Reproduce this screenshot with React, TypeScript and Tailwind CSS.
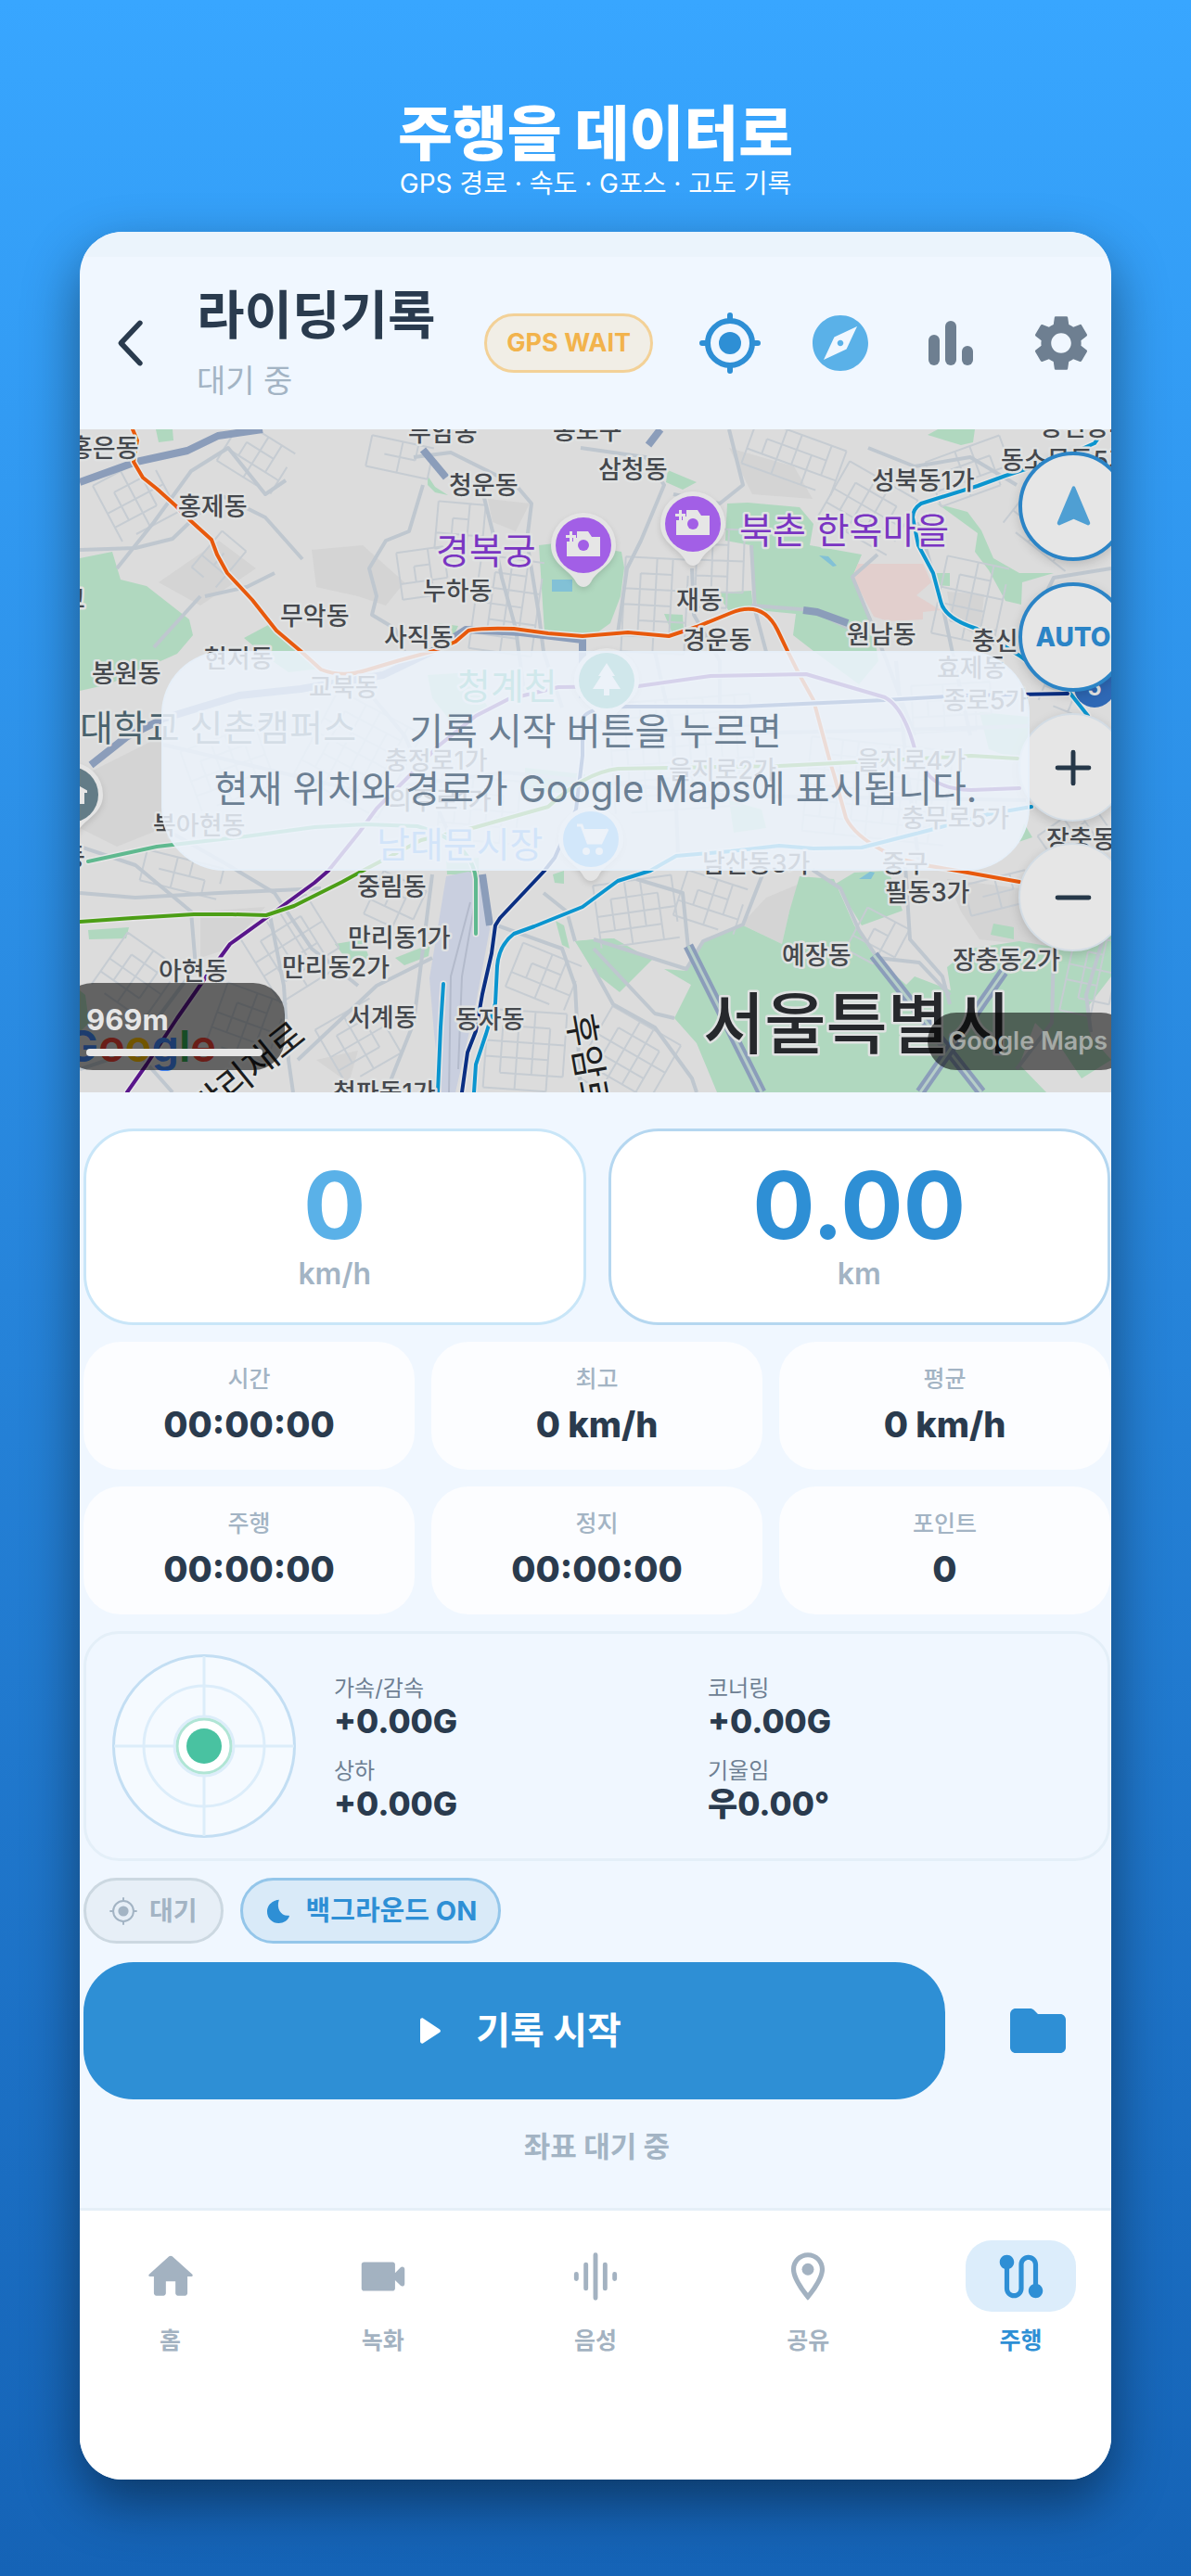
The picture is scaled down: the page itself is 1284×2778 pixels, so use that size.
import { useState } from "react";
import type { ReactNode } from "react";
import clsx from "clsx";
import { MdExplore, MdRoute, MdSettings } from "react-icons/md";

interface IconProps {
  className?: string;
}

const Icon = ({ className, children }: IconProps & { children: ReactNode }) => (
  <svg viewBox="0 0 24 24" fill="currentColor" aria-hidden="true" className={clsx("shrink-0", className)}>
    {children}
  </svg>
);

const BackIcon = ({ className }: IconProps) => (
  <Icon className={className}>
    <path d="M15.6 4.8 8.8 12l6.8 7.2" fill="none" stroke="currentColor" strokeWidth="1.9" strokeLinecap="round" strokeLinejoin="round" />
  </Icon>
);

const LocateIcon = ({ className }: IconProps) => (
  <Icon className={className}>
    <circle cx="12" cy="12" r="4" />
    <circle cx="12" cy="12" r="8" fill="none" stroke="currentColor" strokeWidth="2" />
    <path d="M12 2v2M12 20v2M2 12h2M20 12h2" stroke="currentColor" strokeWidth="2" strokeLinecap="round" />
  </Icon>
);

const LocateThinIcon = ({ className }: IconProps) => (
  <Icon className={className}>
    <circle cx="12" cy="12" r="4.2" />
    <circle cx="12" cy="12" r="8.2" fill="none" stroke="currentColor" strokeWidth="1.5" />
    <path d="M12 1v3M12 20v3M1 12h3M20 12h3" stroke="currentColor" strokeWidth="1.5" />
  </Icon>
);

const BarsIcon = ({ className }: IconProps) => (
  <Icon className={className}>
    <rect x="4" y="9" width="4" height="11" rx="2" />
    <rect x="10" y="4" width="4" height="16" rx="2" />
    <rect x="16" y="13" width="4" height="7" rx="2" />
  </Icon>
);

const ArrowIcon = ({ className }: IconProps) => (
  <Icon className={className}>
    <path d="M11.3 3.2c.3-.7 1.1-.7 1.4 0l6.7 15.9c.3.8-.4 1.5-1.1 1.2L12 17.6l-6.3 2.7c-.7.3-1.4-.4-1.1-1.2z" />
  </Icon>
);

const MoonIcon = ({ className }: IconProps) => (
  <Icon className={className}>
    <path d="M12.6 2.8C12.2 2.5 3 4 3 12.6a9.2 9.2 0 0 0 9.4 9.2c4 0 7.2-2.2 8.5-5.4.2-.6-.2-1-.8-.9-5.6.6-10-5.4-7.5-12.7z" />
  </Icon>
);

const PlayIcon = ({ className }: IconProps) => (
  <Icon className={className}>
    <path d="M7 6.2v11.6c0 .8.9 1.3 1.5.9l9-5.8c.6-.4.6-1.3 0-1.7l-9-5.9C7.9 4.900 7 5.400 7 6.200z" />
  </Icon>
);

const FolderIcon = ({ className }: IconProps) => (
  <Icon className={className}>
    <path d="M10.59 4.59C10.21 4.21 9.7 4 9.17 4H4c-1.1 0-1.99.9-1.99 2L2 18c0 1.1.9 2 2 2h16c1.1 0 2-.9 2-2V8c0-1.1-.9-2-2-2h-8l-1.41-1.41z" />
  </Icon>
);

const HomeIcon = ({ className }: IconProps) => (
  <Icon className={className}>
    <path d="M10 19v-5h4v5c0 .55.45 1 1 1h3c.55 0 1-.45 1-1v-7h1.7c.46 0 .68-.57.33-.87L12.67 3.6c-.38-.34-.96-.34-1.34 0l-8.36 7.53c-.34.3-.13.87.33.87H5v7c0 .55.45 1 1 1h3c.55 0 1-.45 1-1z" />
  </Icon>
);

const VideoIcon = ({ className }: IconProps) => (
  <Icon className={className}>
    <path d="M17 10.5V7c0-.55-.45-1-1-1H4c-.55 0-1 .45-1 1v10c0 .55.45 1 1 1h12c.55 0 1-.45 1-1v-3.5l2.29 2.29c.63.63 1.71.18 1.71-.71V8.91c0-.89-1.08-1.34-1.71-.71L17 10.5z" />
  </Icon>
);

const VoiceIcon = ({ className }: IconProps) => (
  <Icon className={className}>
    <path d="M4 11v2M8 7v10M12 3v18M16 7v10M20 11v2" stroke="currentColor" strokeWidth="1.9" strokeLinecap="round" />
  </Icon>
);

const PinIcon = ({ className }: IconProps) => (
  <Icon className={className}>
    <path d="M12 2C8.13 2 5 5.13 5 9c0 5.25 7 13 7 13s7-7.75 7-13c0-3.87-3.13-7-7-7zM7 9c0-2.76 2.24-5 5-5s5 2.24 5 5c0 2.88-2.88 7.19-5 9.88C9.92 16.21 7 11.85 7 9z" />
    <circle cx="12" cy="9" r="2.5" />
  </Icon>
);

// ---------------------------------------------------------------- map data

const parks = [
  "0,139 35,132 44,162 72,169 118,205 122,222 105,242 31,275 0,282",
  "82,0 100,0 101,12 85,14",
  "177,225 205,210 238,239 260,258 225,262 201,245",
  "495,125 520,122 584,132 587,149 583,180 572,209 554,222 501,219",
  "375,50 383,62 397,71 383,68 375,60",
  "386,209 408,212 402,225",
  "698,80 720,79 776,84 791,102 787,125 843,135 833,159 854,205 861,250 840,275 791,239 769,222 772,199 730,195 724,125 696,120",
  "924,80 957,89 972,109 985,139 1013,155 1050,155 1016,165 1015,189 998,185 980,152 965,132 968,112",
  "634,44 665,57 650,65 632,57",
  "914,6 925,0 965,0 963,14 950,17",
  "630,199 650,200 651,215 638,218",
  "686,176 724,174 726,194 700,196",
  "920,155 938,155 938,169 922,168",
  "375,265 420,262 440,300 400,315 380,290",
  "480,365 545,372 540,395 480,388",
  "700,400 735,410 740,430 705,435",
  "970,305 1024,310 1020,360 980,345",
  "554,550 576,549 617,572 582,607 554,585 534,552",
  "534,552 574,549 574,600 549,575",
  "9,540 53,537 50,549 10,550",
  "275,555 305,550 312,570 290,575",
  "340,570 378,555 376,568 350,578",
  "395,465 430,462 430,480 396,480",
  "510,480 522,476 522,490 512,489",
  "513,530 522,535 528,560 520,556",
  "0,605 6,610 10,640 0,650",
  "776,482 813,485 835,535 857,569 891,599 900,590 939,605 935,580 960,560 1013,552 1060,560 1112,540 1112,590 1085,625 1090,655 1112,680 1080,700 1060,670 1030,640 1013,685 1042,715 687,715 665,662 641,635 659,599 630,582 654,584 672,552 713,534 757,555 765,520",
  "835,478 872,476 887,519 843,535 815,490",
  "985,533 1007,537 1007,550 982,545",
  "1018,425 1027,440 1012,445",
];

const grounds = [
  "250,130 305,125 350,165 330,190 300,180 255,170",
  "440,75 485,80 470,110 445,100",
  "130,520 200,515 160,560 130,570",
  "0,375 90,330 90,430 40,450 0,430",
  "713,534 740,505 776,490 776,519 765,520 757,555",
  "935,485 1013,495 1060,560 970,550 950,520",
  "255,680 300,670 290,705",
  "700,20 770,40 790,75 725,70",
  "935,175 975,178 970,225 940,205",
  "85,165 150,120 190,150 130,190",
];

const highways = [
  "M0 57 61 35 116 23 149 7 197 0",
  "M370 22 395 52",
  "M12 362 50 332 90 312 172 287 238 280 327 265 379 240 416 216 475 219 542 227V290",
  "M780 195 795 197 828 209",
  "M626 0 613 17",
  "M434 480 442 535",
];

const tunnels = ["M656 557 735 715", "M856 567 972 715", "M996 585 906 715"];

const roads = [
  "M0 130 60 128 100 118 150 70 200 95 240 140",
  "M40 150 80 100 120 45 160 20 200 70 222 55",
  "M360 30 400 25 470 60 487 80 482 120",
  "M430 50 445 110 455 160 470 215 480 290",
  "M370 60 355 110 330 120 312 150 320 180 315 200 340 215 350 240",
  "M482 120 495 200 500 240 520 300",
  "M135 180 180 170 210 155",
  "M80 235 130 180",
  "M540 20 610 30 630 60 605 120 590 150 580 220",
  "M700 0 715 60 690 80 640 70",
  "M724 190 790 195 830 215",
  "M860 135 833 159 856 215 870 250 900 330",
  "M724 125 728 195 740 240",
  "M904 100 930 190 945 260 960 330",
  "M1112 150 1050 160 1030 200 1045 250",
  "M850 20 900 40 960 30 1010 60",
  "M660 150 662 200 690 250 690 300",
  "M0 500 60 505 150 500 260 495",
  "M90 430 160 470 210 500 250 560 300 600",
  "M0 450 60 470 120 520 125 580 80 640",
  "M205 524 220 600 225 680 230 715",
  "M380 480 370 560 360 640 330 715",
  "M450 535 520 560 534 600 540 715",
  "M534 552 525 520 500 500",
  "M235 680 320 600 380 570",
  "M0 690 60 670 100 715",
  "M554 582 575 620 620 645 660 700 665 715",
  "M641 635 620 630 554 560",
  "M554 550 654 582 672 552 715 534 740 470",
  "M656 560 650 500 600 485",
  "M790 475 820 495 840 540 860 570 905 575 938 610",
  "M890 470 895 550 930 590 938 620",
  "M1050 560 1048 640 1010 690",
  "M1112 520 1085 610 1090 650",
  "M1026 470 1060 500 1112 520",
  "M90 340 300 390 460 370 700 395 1020 400",
  "M620 240 640 330 645 460",
  "M300 270 350 330 400 440",
  "M880 250 890 350 905 470",
  "M600 330 850 325 1024 320",
];

// Short dense blocks: centre x, centre y, rotation, columns, rows
const blocks: [number, number, number, number, number][] = [
  [60, 75, -28, 4, 4],
  [190, 30, 32, 4, 3],
  [150, 140, 40, 2, 3],
  [345, 30, 12, 4, 2],
  [410, 105, 5, 3, 3],
  [370, 155, -8, 3, 3],
  [460, 190, 8, 4, 6],
  [620, 190, 3, 4, 6],
  [690, 150, 2, 3, 5],
  [770, 30, 20, 6, 3],
  [850, 85, 30, 5, 4],
  [960, 45, -20, 5, 3],
  [960, 185, 12, 4, 5],
  [1050, 100, 38, 5, 4],
  [1070, 270, 22, 3, 4],
  [1075, 440, -35, 4, 3],
  [160, 365, -20, 5, 4],
  [300, 350, 28, 6, 6],
  [430, 410, 5, 5, 4],
  [650, 350, -4, 9, 7],
  [860, 390, 6, 9, 6],
  [940, 300, -3, 5, 3],
  [110, 480, 14, 5, 2],
  [230, 560, -32, 5, 5],
  [60, 590, 35, 4, 4],
  [180, 640, 20, 4, 4],
  [300, 660, -30, 4, 4],
  [340, 510, 25, 3, 3],
  [480, 670, 4, 5, 5],
  [500, 590, 22, 4, 3],
  [600, 520, -8, 5, 4],
  [680, 510, 18, 4, 3],
  [590, 680, 30, 5, 5],
  [860, 550, 28, 3, 3],
  [1090, 590, 12, 3, 5],
  [990, 500, -14, 4, 2],
];

const blockPath = (cols: number, rows: number) => {
  const gap = 17;
  const w = cols * gap;
  const h = rows * gap;
  let d = "";
  for (let c = 0; c <= cols; c++) {
    const cut = (c * 7) % 3 === 1 ? gap : 0;
    d += `M${c * gap - w / 2} ${-h / 2 + cut}V${h / 2 - (c % 2) * gap}`;
  }
  for (let r = 0; r <= rows; r++) {
    const cut = (r * 5) % 3 === 2 ? gap : 0;
    d += `M${-w / 2 + cut} ${r * gap - h / 2}H${w / 2 - (r % 2) * gap}`;
  }
  return d;
};

const metro = [
  { color: "#e8590c", d: "M57 0 62 12 58 35 68 52 83 64 103 82 120 99 142 119 148 135 159 155 186 184 212 217 238 239 260 259Q283 268 308 260L345 249 382 239 405 229 419 217Q430 214 468 215L505 220 542 223 591 219 635 223 665 213 702 198Q736 184 752 216L763 239 776 265 791 292 809 359 813 372 826 419Q835 438 867 455L887 464 917 471 946 476 1013 488" },
  { color: "#0b95cf", d: "M1105 0 1094 15 1060 30 998 50 968 61 907 80Q898 86 898 95L904 125 920 155 928 185Q932 204 967 215L1013 244 1068 285 1087 309" },
  { color: "#0b95cf", d: "M1026 407 980 415 917 432 843 451 791 452 754 449 702 455 643 460 615 476 580 487 542 515 490 536 468 544Q452 556 450 579L448 619 438 652 427 685 425 715" },
  { color: "#0b95cf", d: "M392 598 389 645 386 715" },
  { color: "#0a2f83", d: "M412 715 418 672 427 649 434 609 444 565 448 535 453 527 501 476 512 462 535 410 542 352V315Q542 299 591 299L713 299 868 292 954 287 1065 285" },
  { color: "#59168b", d: "M51 715 72 685 105 635 135 592 162 555 205 524 253 489 268 476 301 435 320 409 357 372 386 342 427 309 462 291 516 278 602 277 680 266 783 264 868 289Q888 300 900 344L913 370Q925 388 961 389L1013 387" },
  { color: "#4c9e16", d: "M0 531 57 527 123 523 164 523 201 524 231 514 283 488 305 476 368 443 427 429 505 407Q545 370 580 366L754 363 835 359 961 352 1011 355" },
  { color: "#5fb98f", d: "M9 466 83 450 179 439 253 429 308 426 364 428Q423 445 427 485V544" },
];

type LabelKind = "district" | "purple" | "teal" | "blue" | "slate";

const labels: [string, number, number, LabelKind?][] = [
  ["홍은동", -11, 30],
  ["부암동", 354, 13],
  ["종로구", 510, 11],
  ["청운동", 398, 70],
  ["삼청동", 559, 53],
  ["성북동1가", 854, 65],
  ["동선동4가", 1035, 7],
  ["동소문동5가", 993, 43],
  ["홍제동", 106, 93],
  ["누하동", 370, 184],
  ["무악동", 216, 211],
  ["사직동", 328, 234],
  ["재동", 643, 194],
  ["경운동", 650, 237],
  ["원남동", 827, 231],
  ["충신동", 962, 238],
  ["현저동", 134, 257],
  ["봉원동", 13, 273],
  ["교북동", 247, 288],
  ["효제동", 924, 267],
  ["종로5가", 931, 302],
  ["교", -19, 193],
  ["충정로1가", 329, 367],
  ["의주로1가", 333, 410],
  ["을지로2가", 635, 377],
  ["을지로4가", 838, 367],
  ["북아현동", 79, 437],
  ["충무로5가", 886, 429],
  ["동", -19, 471],
  ["장충동", 1042, 452],
  ["남산동3가", 671, 478],
  ["중구", 865, 478],
  ["필동3가", 868, 509],
  ["중림동", 299, 503],
  ["만리동1가", 289, 558],
  ["만리동2가", 218, 590],
  ["아현동", 85, 594],
  ["서계동", 289, 644],
  ["동자동", 405, 646],
  ["청파동1가", 273, 725],
  ["예장동", 757, 577],
  ["장충동2가", 941, 582],
  ["경복궁", 384, 145, "purple"],
  ["북촌 한옥마을", 711, 123, "purple"],
  ["청계천", 407, 291, "teal"],
  ["남대문시장", 320, 462, "blue"],
  ["대학교 신촌캠퍼스", 0, 336, "slate"],
];

const labelStyles: Record<LabelKind, string> = {
  district: "fill-[#45484d] text-[27px] font-medium",
  purple: "fill-[#7a35c2] text-[39px]",
  teal: "fill-[#34a58f] text-[39px]",
  blue: "fill-[#3f8ae8] text-[39px]",
  slate: "fill-[#4a626d] text-[39px]",
};

interface MapPinProps {
  x: number;
  y: number;
  color: string;
  children: ReactNode;
}

const MapPin = ({ x, y, color, children }: MapPinProps) => (
  <g transform={`translate(${x} ${y})`} className="drop-shadow-md">
    <path d="M0 45C-4 45-7 42-9 38-16 26-35 20-35 0A35 35 0 0 1 35 0C35 20 16 26 9 38 7 42 4 45 0 45z" fill="#e4e4e4" />
    <circle r="30" fill={color} />
    {children}
  </g>
);

const CameraGlyph = () => (
  <g>
    <path d="M-18-4h7v-4h4v-7H5l4 6h9v21h-36z" fill="#e6e6e6" />
    <path d="M-15-15h3v4h4v3h-4v4h-3v-4h-4v-3h4z" fill="#e6e6e6" />
    <circle r="6" fill="#a25fe6" />
  </g>
);

const SeoulMap = () => (
  <svg
    viewBox="0 0 1112 715"
    preserveAspectRatio="xMidYMid slice"
    role="img"
    aria-label="서울특별시 지도"
    className="block h-[715px] w-full bg-[#dcdcdc]"
  >
    <g fill="#d4d4d4">
      {grounds.map((points) => (
        <polygon key={points} points={points} />
      ))}
    </g>
    <g fill="#b0d8bf">
      {parks.map((points) => (
        <polygon key={points} points={points} />
      ))}
    </g>
    <polygon points="839,145 909,145 918,165 902,179 928,195 909,197 909,205 872,207 856,202 833,159" fill="#e2cfcd" />
    <polygon points="395,482 419,477 438,485 442,539 427,619 405,715 390,715 382,652 377,592" fill="#c9cfdf" />
    <path d="M421 510 400 590 398 715M426 510 412 590 408 690" fill="none" stroke="#b3bacb" strokeWidth="2" />
    <path d="M509 162h22v13h-22zM797 136l10 1 9 10-4 1zM840 485l12-8 5 1-4 7z" fill="#82c1d6" />
    <g fill="none" stroke="#c6ccd2" strokeWidth="2">
      {blocks.map(([x, y, angle, cols, rows]) => (
        <path key={`${x}-${y}`} d={blockPath(cols, rows)} transform={`translate(${x} ${y}) rotate(${angle})`} />
      ))}
    </g>
    <g fill="none" stroke="#bfc7cf" strokeWidth="4" strokeLinejoin="round">
      {roads.map((d) => (
        <path key={d} d={d} />
      ))}
    </g>
    <g fill="none" stroke="#8b9dba" strokeWidth="8" strokeLinejoin="round">
      {highways.map((d) => (
        <path key={d} d={d} />
      ))}
    </g>
    {tunnels.map((d) => (
      <g key={d} fill="none">
        <path d={d} stroke="#8b9dba" strokeWidth="11" />
        <path d={d} stroke="#b7cfc9" strokeWidth="3" />
      </g>
    ))}
    {metro.map(({ color, d }) => (
      <g key={d} fill="none" strokeLinejoin="round" strokeLinecap="round">
        <path d={d} stroke="#e6e6e6" strokeWidth="7" />
        <path d={d} stroke={color} strokeWidth="4" />
      </g>
    ))}
    <circle cx="1094" cy="278" r="22" fill="#2e68b5" />
    <text x="1094" y="287" textAnchor="middle" className="fill-[#e6e6e6] text-[24px] font-bold">
      5
    </text>
    <g className="stroke-[#e0e2e2] stroke-[5px] [paint-order:stroke] [stroke-linejoin:round]">
      {labels.map(([text, x, y, kind = "district"]) => (
        <text key={`${text}-${x}`} x={x} y={y} className={labelStyles[kind]}>
          {text}
        </text>
      ))}
      <text transform="translate(134 748) rotate(-39)" className="fill-[#1d1e20] text-[39px]">
        만리재로
      </text>
      <text transform="translate(525 632) rotate(80)" className="fill-[#1d1e20] text-[39px]">
        후암로
      </text>
      <text x="672" y="667" className="fill-[#26282c] text-[72px] font-medium">
        서울특별시
      </text>
    </g>
    <MapPin x={543} y={125} color="#a25fe6">
      <CameraGlyph />
    </MapPin>
    <MapPin x={661} y={102} color="#a25fe6">
      <CameraGlyph />
    </MapPin>
    <MapPin x={568} y={271} color="#2fa08a">
      <path d="M0-19 9-5H6l9 14H3v7h-6V9h-12l9-14h-3z" fill="#e6e6e6" />
    </MapPin>
    <MapPin x={551} y={442} color="#3f9ef0">
      <path d="M-15-15h5l7 19h14l7-15" fill="none" stroke="#e6e6e6" strokeWidth="3" />
      <path d="M-9-11h26L10 4H-4z" fill="#e6e6e6" />
      <circle cx="-5" cy="13" r="4" fill="#e6e6e6" />
      <circle cx="9" cy="13" r="4" fill="#e6e6e6" />
    </MapPin>
    <MapPin x={-10} y={394} color="#637c87">
      <path d="M-14-4 3-14l16 9v4h-3v12H-12zM2-2v10M9-2v10" fill="#e6e6e6" stroke="#637c87" strokeWidth="2" />
    </MapPin>
  </svg>
);

// ---------------------------------------------------------------- screen

const mapButton =
  "flex items-center justify-center rounded-full bg-[#e6e6e6] shadow-[0_4px_12px_rgba(0,0,0,0.15)]";

const MapPanel = () => (
  <section className="relative overflow-hidden">
    <SeoulMap />

    <div className="absolute top-[24px] -right-[18px] flex flex-col gap-[23px]">
      <button aria-label="내 방향" className={clsx(mapButton, "size-[118px] border-4 border-[#2b84c6] text-[#4f9fd3]")}>
        <ArrowIcon className="size-[57px]" />
      </button>
      <button
        className={clsx(mapButton, "size-[118px] border-4 border-[#2b84c6] text-[28px] font-extrabold text-[#2b84c6]")}
      >
        AUTO
      </button>
      <button aria-label="확대" className={clsx(mapButton, "size-[117px] border-2 border-[#d3dce4] text-[#263849]")}>
        <Icon className="size-[54px]">
          <path d="M4.5 12h15M12 4.5v15" stroke="currentColor" strokeWidth="2.2" strokeLinecap="round" />
        </Icon>
      </button>
      <button aria-label="축소" className={clsx(mapButton, "size-[117px] border-2 border-[#d3dce4] text-[#263849]")}>
        <Icon className="size-[54px]">
          <path d="M4.5 12h15" stroke="currentColor" strokeWidth="2.2" strokeLinecap="round" />
        </Icon>
      </button>
    </div>

    <div className="absolute inset-x-[88px] top-[239px] flex h-[237px] items-center justify-center rounded-[68px] border-2 border-[#e4eef8]/60 bg-[#ecf3fc]/85 pb-[2px] text-center text-[40px] leading-[62px] whitespace-nowrap text-[#6b7f93]">
      <p>
        기록 시작 버튼을 누르면
        <br />
        현재 위치와 경로가 Google Maps에 표시됩니다.
      </p>
    </div>

    <p className="absolute bottom-[18px] -left-[15px] text-[47px] leading-[64px] font-semibold" aria-label="Google">
      <span className="text-[#4285f4]">G</span>
      <span className="text-[#ea4335]">o</span>
      <span className="text-[#fbbc04]">o</span>
      <span className="text-[#4285f4]">g</span>
      <span className="text-[#34a853]">l</span>
      <span className="text-[#ea4335]">e</span>
    </p>
    <div className="absolute bottom-[24px] -left-[20px] flex h-[94px] w-[241px] flex-col justify-end rounded-[34px] bg-black/55 pr-[24px] pb-[15px] pl-[27px] text-[#e6e6e6]">
      <span className="text-[31px] leading-[44px] font-bold">969m</span>
      <span className="mt-[9px] h-2 rounded-full bg-[#e6e6e6]" />
    </div>
    <div className="absolute -right-[20px] bottom-[24px] flex h-[62px] items-center rounded-full bg-black/55 pr-[24px] pl-[22px] text-[27px] font-semibold text-[#a5aaa6]">
      Google Maps
    </div>
  </section>
);

const headerActions = [
  { label: "현재 위치", icon: LocateIcon, color: "text-[#2e8fd5]" },
  { label: "나침반", icon: MdExplore, color: "text-[#5ab1e8]" },
  { label: "통계", icon: BarsIcon, color: "text-[#6e7f91]" },
  { label: "설정", icon: MdSettings, color: "text-[#6e7f91]" },
];

const Header = () => (
  <header className="flex h-[186px] items-center px-[18px]">
    <button aria-label="뒤로" className="flex w-[72px] justify-center text-[#2a3b4e]">
      <BackIcon className="size-[72px]" />
    </button>
    <div className="ml-[36px] flex-1 whitespace-nowrap">
      <h2 className="text-[56px] leading-[72px] font-bold text-[#2a3b4e]">라이딩기록</h2>
      <p className="mt-[10px] text-[34px] leading-[50px] text-[#a3b4c4]">대기 중</p>
    </div>
    <span className="flex h-[64px] items-center rounded-full border-3 border-[#f3d197] bg-[#f1eee6] px-[21px] text-[27px] font-bold whitespace-nowrap text-[#f2b34c]">
      GPS WAIT
    </span>
    <div className="ml-[47px] flex gap-[47px]">
      {headerActions.map(({ label, icon: ActionIcon, color }) => (
        <button key={label} aria-label={label} className={color}>
          <ActionIcon className="size-[72px]" />
        </button>
      ))}
    </div>
  </header>
);

const stats = [
  { label: "시간", value: "00:00:00" },
  { label: "최고", value: "0 km/h" },
  { label: "평균", value: "0 km/h" },
  { label: "주행", value: "00:00:00" },
  { label: "정지", value: "00:00:00" },
  { label: "포인트", value: "0" },
];

const forces = [
  { label: "가속/감속", value: "+0.00G" },
  { label: "코너링", value: "+0.00G" },
  { label: "상하", value: "+0.00G" },
  { label: "기울임", value: "우0.00°" },
];

const GForceGauge = () => (
  <svg viewBox="0 0 198 198" className="size-[198px] shrink-0" aria-hidden="true">
    <circle cx="99" cy="99" r="97.5" fill="#f5faff" stroke="#c3def3" strokeWidth="3" />
    <path d="M99 2v194M2 99h194" stroke="#dcedfa" strokeWidth="3" />
    <circle cx="99" cy="99" r="65" fill="none" stroke="#dcedfa" strokeWidth="3" />
    <circle cx="99" cy="99" r="32" fill="#fff" stroke="#dcedfa" strokeWidth="3" />
    <circle cx="99" cy="99" r="29" fill="#fff" stroke="#b0e5d5" strokeWidth="3" />
    <circle cx="99" cy="99" r="19" fill="#49c2a1" />
  </svg>
);

const tabs = [
  { label: "홈", icon: HomeIcon },
  { label: "녹화", icon: VideoIcon },
  { label: "음성", icon: VoiceIcon },
  { label: "공유", icon: PinIcon },
  { label: "주행", icon: MdRoute },
];

const TabBar = () => {
  const [active, setActive] = useState("주행");

  return (
    <nav className="flex justify-between border-t-3 border-[#e5eff7] bg-white px-[38px] pt-[32px] pb-[132px]">
      {tabs.map(({ label, icon: TabIcon }) => (
        <button
          key={label}
          onClick={() => setActive(label)}
          className={clsx(
            "flex w-[119px] flex-col items-center text-[25px] leading-[36px] font-bold",
            active === label ? "text-[#2e8fd5]" : "text-[#a3b2c1]"
          )}
        >
          <span
            className={clsx(
              "flex h-[77px] w-full items-center justify-center rounded-[28px]",
              active === label && "bg-[#dcedfb]"
            )}
          >
            <TabIcon className="size-[62px]" />
          </span>
          <span className="mt-[13px]">{label}</span>
        </button>
      ))}
    </nav>
  );
};

const App = () => {
  return (
    <main className="min-h-screen bg-linear-to-b from-[#38a6ff] to-[#1563b6] px-[86px] pt-[104px] pb-[102px] font-['Inter','Noto_Sans_CJK_KR',sans-serif]">
      <div className="text-center text-white">
        <h1 className="text-[64px] leading-[80px] font-extrabold">주행을 데이터로</h1>
        <p className="text-[28px] leading-[28px]">GPS 경로 · 속도 · G포스 · 고도 기록</p>
      </div>

      <div className="mt-[38px] overflow-hidden rounded-[46px] bg-[#f0f7ff] shadow-[0_24px_60px_rgba(0,0,0,0.45)]">
        <div className="h-[27px] bg-[#ebf4fc]" />
        <Header />
        <MapPanel />

        <div className="pt-[39px] pr-[1px] pl-[4px]">
          <div className="grid grid-cols-2 gap-[24px] text-center">
            <div className="rounded-[54px] border-3 border-[#c9e6f8] bg-white pt-[30px] pb-[32px]">
              <p className="text-[100px] leading-[100px] font-bold text-[#5ab1e8]">0</p>
              <p className="mt-[4px] text-[32px] leading-[40px] font-semibold text-[#a3b4c4]">km/h</p>
            </div>
            <div className="rounded-[54px] border-3 border-[#b5d7f0] bg-white pt-[30px] pb-[32px]">
              <p className="text-[100px] leading-[100px] font-bold text-[#2e8fd5]">0.00</p>
              <p className="mt-[4px] text-[32px] leading-[40px] font-semibold text-[#a3b4c4]">km</p>
            </div>
          </div>

          <dl className="mt-[18px] grid grid-cols-3 gap-[18px] text-center">
            {stats.map(({ label, value }) => (
              <div key={label} className="rounded-[40px] bg-[#fcfdff] pt-[22px] pb-[26px]">
                <dt className="text-[25px] leading-[36px] font-medium text-[#a3b4c4]">{label}</dt>
                <dd className="mt-[8px] text-[38px] leading-[46px] font-extrabold text-[#2a3b4e]">{value}</dd>
              </div>
            ))}
          </dl>

          <div className="mt-[18px] flex items-center rounded-[38px] border-3 border-[#e4eff8] py-[22px] pr-[28px] pl-[28px]">
            <GForceGauge />
            <dl className="ml-[41px] grid flex-1 grid-cols-2 gap-y-[19px]">
              {forces.map(({ label, value }) => (
                <div key={label}>
                  <dt className="text-[24px] leading-[34px] text-[#6e8093]">{label}</dt>
                  <dd className="text-[35px] leading-[36px] font-extrabold text-[#2a3b4e]">{value}</dd>
                </div>
              ))}
            </dl>
          </div>

          <div className="mt-[18px] flex gap-[18px] text-[28px] leading-[36px] font-bold">
            <span className="flex h-[71px] items-center gap-[12px] rounded-full border-3 border-[#ccd8e1] bg-[#e7eff7] pr-[25px] pl-[24px] text-[#a3b4c4]">
              <LocateThinIcon className="size-[32px]" />
              대기
            </span>
            <button className="flex h-[71px] items-center gap-[14px] rounded-full border-3 border-[#94c6ea] bg-[#d9eaf8] pr-[23px] pl-[22px] text-[29px] text-[#2e8fd5]">
              <MoonIcon className="size-[32px]" />
              백그라운드 ON
            </button>
          </div>

          <div className="mt-[20px] flex">
            <button className="flex h-[148px] flex-1 items-center justify-center gap-[26px] rounded-[54px] bg-[#2e8fd5] text-[40px] font-bold text-white">
              <PlayIcon className="size-[48px]" />
              기록 시작
            </button>
            <button aria-label="기록 폴더" className="ml-[22px] flex w-[156px] items-center justify-center text-[#2e8fd5]">
              <FolderIcon className="size-[72px]" />
            </button>
          </div>

          <p className="pt-[28px] pb-[43px] text-center text-[31px] leading-[46px] font-bold text-[#a3b4c4]">
            좌표 대기 중
          </p>
        </div>

        <TabBar />
      </div>
    </main>
  );
};

export default App;
